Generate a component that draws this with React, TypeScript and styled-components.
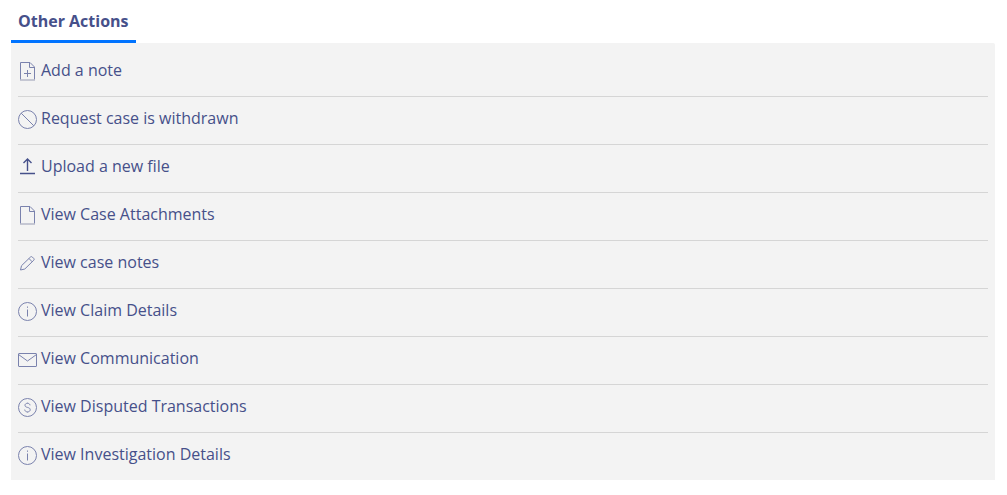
import React from "react";
import styled, { createGlobalStyle } from "styled-components";

const GlobalStyle = createGlobalStyle`
  body {
    margin: 0;
    background: #ffffff;
    color: #46508a;
    font-family: "Open Sans", "Noto Sans", sans-serif;
    font-size: 16px;
    line-height: 24px;
  }
`;

const Page = styled.main`
  padding: 0 12px 15px 11px;
`;

const TabBar = styled.div`
  display: flex;
`;

const Tab = styled.button`
  padding: 9px 7px 7px;
  border: 0;
  border-bottom: 3px solid #0073ff;
  background: none;
  color: inherit;
  font: inherit;
  font-weight: 700;
  cursor: pointer;
`;

const Panel = styled.section`
  padding: 6px 7px 0;
  border-radius: 0 2px 0 0;
  background: #f3f3f3;
`;

const ActionList = styled.ul`
  margin: 0;
  padding: 0;
  list-style: none;
`;

const ActionItem = styled.li`
  padding: 9px 0 14px;

  & + & {
    border-top: 1px solid #d5d5d5;
  }
`;

const ActionLink = styled.a`
  display: flex;
  align-items: flex-start;
  gap: 4px;
  color: inherit;
  text-decoration: none;
`;

const Icon = styled.svg`
  flex: none;
  width: 19px;
  height: 19px;
  margin-top: 4px;
  fill: none;
  stroke: #7a82ad;
  stroke-width: 1;
`;

const FilePage = () => (
  <>
    <path d="M2.5 18V.5h9.500l4.500 4.500V18" />
    <path d="M11.500.5v5h5" />
    <path d="M2 18h15" stroke="#b9bccb" strokeWidth="1.6" />
  </>
);

const InfoMark = () => (
  <>
    <circle cx="9.500" cy="9.500" r="9" />
    <path d="M9.500 7.500v7M9.500 4.500v1.300" />
  </>
);

const icons = {
  fileAdd: (
    <>
      <FilePage />
      <path d="M9.500 8v7M6 11.500h7" />
    </>
  ),
  ban: (
    <>
      <circle cx="9.500" cy="9.500" r="9" />
      <path d="M3.200 3.200l12.600 12.600" />
    </>
  ),
  upload: (
    <g stroke="#46508a" strokeWidth="1.4">
      <path d="M2 15.500h15M9.500 13V1M5.500 5l4-4 4 4" />
    </g>
  ),
  file: <FilePage />,
  pencil: (
    <path d="M2.500 16l1-4.300 9-8.700q.9-.8 1.800 0l1.500 1.500q.8.9 0 1.700l-9 8.800zM11 4.500l3.200 3.300" />
  ),
  info: <InfoMark />,
  mail: (
    <>
      <rect x=".5" y="3.500" width="18" height="13" rx=".5" />
      <path d="M.5 4.500l9 6.500 9-6.500" />
    </>
  ),
  dollar: (
    <>
      <circle cx="9.500" cy="9.500" r="9" />
      <path d="M12 7.300c-.2-1.300-1.100-2-2.500-2-1.500 0-2.500.8-2.500 2 0 1.400 1.200 1.800 2.500 2.100 1.500.4 2.700.9 2.700 2.300 0 1.300-1.100 2.200-2.700 2.200s-2.600-.9-2.800-2.300" />
      <path d="M9.500 4.500v1M9.500 13.800v1" strokeOpacity=".5" />
    </>
  ),
};

const actions: { label: string; icon: keyof typeof icons }[] = [
  { label: "Add a note", icon: "fileAdd" },
  { label: "Request case is withdrawn", icon: "ban" },
  { label: "Upload a new file", icon: "upload" },
  { label: "View Case Attachments", icon: "file" },
  { label: "View case notes", icon: "pencil" },
  { label: "View Claim Details", icon: "info" },
  { label: "View Communication", icon: "mail" },
  { label: "View Disputed Transactions", icon: "dollar" },
  { label: "View Investigation Details", icon: "info" },
];

export default function App() {
  return (
    <Page>
      <GlobalStyle />
      <TabBar role="tablist">
        <Tab type="button" role="tab" id="other-tab" aria-selected="true" aria-controls="other-panel">
          Other Actions
        </Tab>
      </TabBar>
      <Panel role="tabpanel" id="other-panel" aria-labelledby="other-tab">
        <ActionList>
          {actions.map(({ label, icon }) => (
            <ActionItem key={label}>
              <ActionLink href="#">
                <Icon viewBox="0 0 19 19" aria-hidden="true">
                  {icons[icon]}
                </Icon>
                {label}
              </ActionLink>
            </ActionItem>
          ))}
        </ActionList>
      </Panel>
    </Page>
  );
}
